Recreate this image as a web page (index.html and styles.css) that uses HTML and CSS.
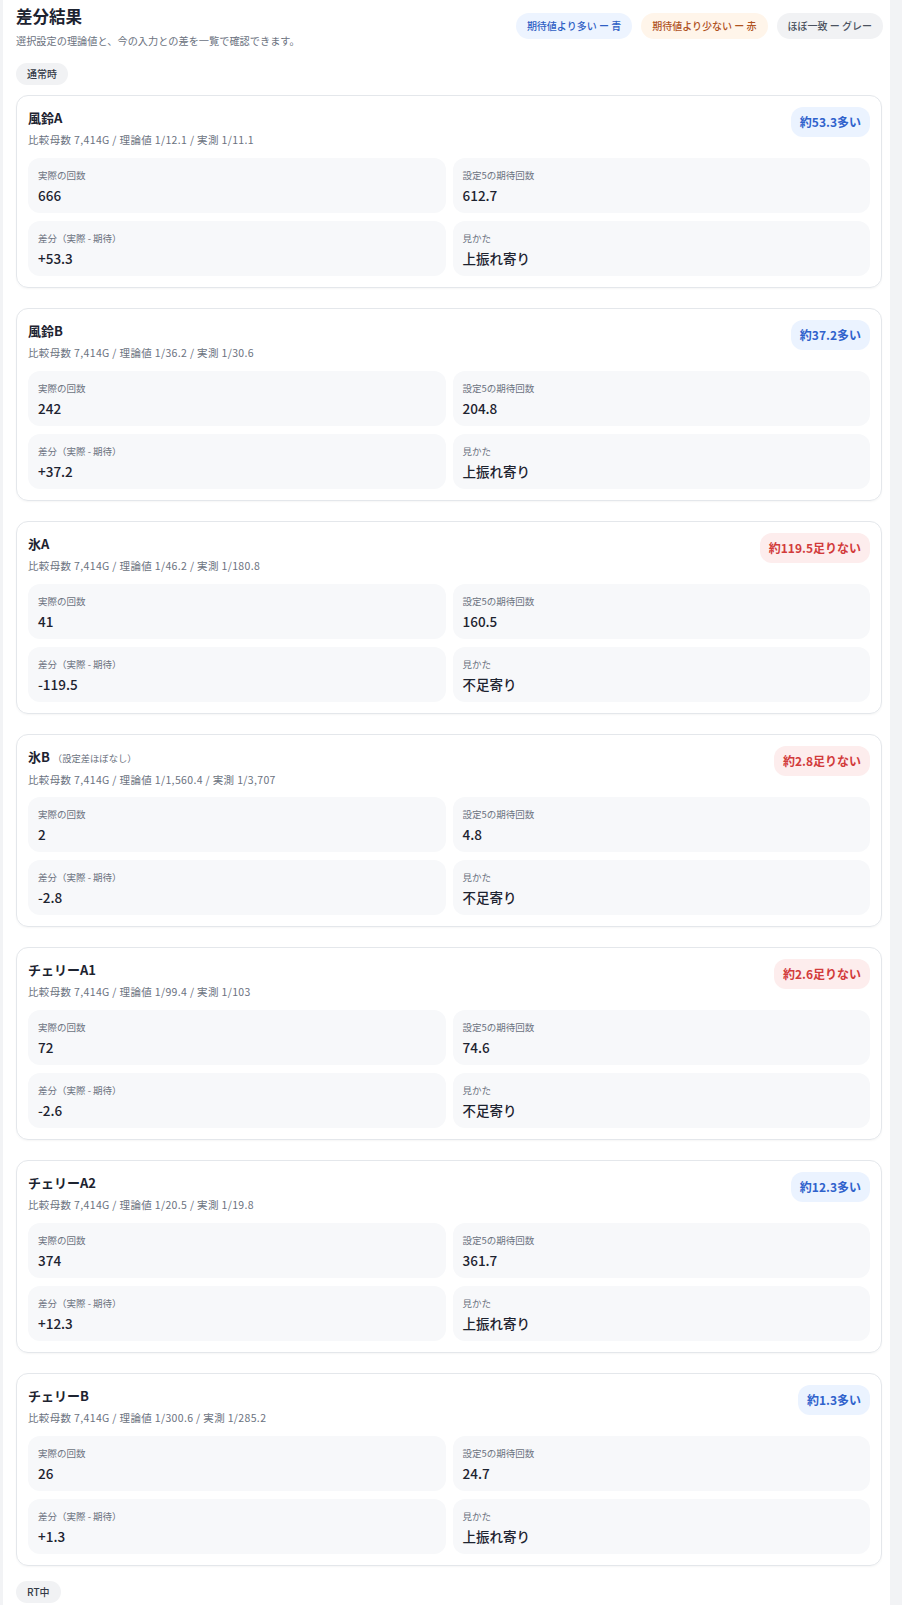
FILE: index.html
```html
<!DOCTYPE html>
<html lang="ja">
<head>
    <meta charset="UTF-8">
    <meta name="viewport" content="width=device-width, initial-scale=1.0">
    <title>差分結果</title>
    <link rel="stylesheet" href="styles.css">
</head>
<body>
    <div class="panel">
        <div class="result-head">
            <div>
                <h2 class="result-title">差分結果</h2>
                <p class="result-desc">選択設定の理論値と、今の入力との差を一覧で確認できます。</p>
            </div>
            <div class="legend">
                <span class="legend-chip up">期待値より多い ー 青</span>
                <span class="legend-chip down">期待値より少ない ー 赤</span>
                <span class="legend-chip even">ほぼ一致 ー グレー</span>
            </div>
        </div>

        <!-- 通常時 -->
        <div class="section-chip">通常時</div>
        <div class="card-list">
            <div class="card">
                <div class="card-head">
                    <div>
                        <div class="card-title">風鈴A</div>
                        <div class="card-sub">比較母数 7,414G / 理論値 1/12.1 / 実測 1/11.1</div>
                    </div>
                    <span class="badge up">約53.3多い</span>
                </div>
                <div class="stats">
                    <div class="stat"><div class="stat-label">実際の回数</div><div class="stat-value">666</div></div>
                    <div class="stat"><div class="stat-label">設定5の期待回数</div><div class="stat-value">612.7</div></div>
                    <div class="stat"><div class="stat-label">差分（実際 - 期待）</div><div class="stat-value">+53.3</div></div>
                    <div class="stat"><div class="stat-label">見かた</div><div class="stat-value">上振れ寄り</div></div>
                </div>
            </div>

            <div class="card">
                <div class="card-head">
                    <div>
                        <div class="card-title">風鈴B</div>
                        <div class="card-sub">比較母数 7,414G / 理論値 1/36.2 / 実測 1/30.6</div>
                    </div>
                    <span class="badge up">約37.2多い</span>
                </div>
                <div class="stats">
                    <div class="stat"><div class="stat-label">実際の回数</div><div class="stat-value">242</div></div>
                    <div class="stat"><div class="stat-label">設定5の期待回数</div><div class="stat-value">204.8</div></div>
                    <div class="stat"><div class="stat-label">差分（実際 - 期待）</div><div class="stat-value">+37.2</div></div>
                    <div class="stat"><div class="stat-label">見かた</div><div class="stat-value">上振れ寄り</div></div>
                </div>
            </div>

            <div class="card">
                <div class="card-head">
                    <div>
                        <div class="card-title">氷A</div>
                        <div class="card-sub">比較母数 7,414G / 理論値 1/46.2 / 実測 1/180.8</div>
                    </div>
                    <span class="badge down">約119.5足りない</span>
                </div>
                <div class="stats">
                    <div class="stat"><div class="stat-label">実際の回数</div><div class="stat-value">41</div></div>
                    <div class="stat"><div class="stat-label">設定5の期待回数</div><div class="stat-value">160.5</div></div>
                    <div class="stat"><div class="stat-label">差分（実際 - 期待）</div><div class="stat-value">-119.5</div></div>
                    <div class="stat"><div class="stat-label">見かた</div><div class="stat-value">不足寄り</div></div>
                </div>
            </div>

            <div class="card">
                <div class="card-head">
                    <div>
                        <div class="card-title">氷B<span class="card-note">（設定差ほぼなし）</span></div>
                        <div class="card-sub">比較母数 7,414G / 理論値 1/1,560.4 / 実測 1/3,707</div>
                    </div>
                    <span class="badge down">約2.8足りない</span>
                </div>
                <div class="stats">
                    <div class="stat"><div class="stat-label">実際の回数</div><div class="stat-value">2</div></div>
                    <div class="stat"><div class="stat-label">設定5の期待回数</div><div class="stat-value">4.8</div></div>
                    <div class="stat"><div class="stat-label">差分（実際 - 期待）</div><div class="stat-value">-2.8</div></div>
                    <div class="stat"><div class="stat-label">見かた</div><div class="stat-value">不足寄り</div></div>
                </div>
            </div>

            <div class="card">
                <div class="card-head">
                    <div>
                        <div class="card-title">チェリーA1</div>
                        <div class="card-sub">比較母数 7,414G / 理論値 1/99.4 / 実測 1/103</div>
                    </div>
                    <span class="badge down">約2.6足りない</span>
                </div>
                <div class="stats">
                    <div class="stat"><div class="stat-label">実際の回数</div><div class="stat-value">72</div></div>
                    <div class="stat"><div class="stat-label">設定5の期待回数</div><div class="stat-value">74.6</div></div>
                    <div class="stat"><div class="stat-label">差分（実際 - 期待）</div><div class="stat-value">-2.6</div></div>
                    <div class="stat"><div class="stat-label">見かた</div><div class="stat-value">不足寄り</div></div>
                </div>
            </div>

            <div class="card">
                <div class="card-head">
                    <div>
                        <div class="card-title">チェリーA2</div>
                        <div class="card-sub">比較母数 7,414G / 理論値 1/20.5 / 実測 1/19.8</div>
                    </div>
                    <span class="badge up">約12.3多い</span>
                </div>
                <div class="stats">
                    <div class="stat"><div class="stat-label">実際の回数</div><div class="stat-value">374</div></div>
                    <div class="stat"><div class="stat-label">設定5の期待回数</div><div class="stat-value">361.7</div></div>
                    <div class="stat"><div class="stat-label">差分（実際 - 期待）</div><div class="stat-value">+12.3</div></div>
                    <div class="stat"><div class="stat-label">見かた</div><div class="stat-value">上振れ寄り</div></div>
                </div>
            </div>

            <div class="card">
                <div class="card-head">
                    <div>
                        <div class="card-title">チェリーB</div>
                        <div class="card-sub">比較母数 7,414G / 理論値 1/300.6 / 実測 1/285.2</div>
                    </div>
                    <span class="badge up">約1.3多い</span>
                </div>
                <div class="stats">
                    <div class="stat"><div class="stat-label">実際の回数</div><div class="stat-value">26</div></div>
                    <div class="stat"><div class="stat-label">設定5の期待回数</div><div class="stat-value">24.7</div></div>
                    <div class="stat"><div class="stat-label">差分（実際 - 期待）</div><div class="stat-value">+1.3</div></div>
                    <div class="stat"><div class="stat-label">見かた</div><div class="stat-value">上振れ寄り</div></div>
                </div>
            </div>
        </div>

        <!-- RT中 -->
        <div class="section-chip next">RT中</div>
    </div>
</body>
</html>
```

FILE: styles.css
```css
body {
    margin: 0;
    padding: 0;
    background-color: #f2f3f5;
    font-family: "Noto Sans CJK JP", "Noto Sans", sans-serif;
    color: #1f2329;
}
.panel {
    margin-left: 3px;
    width: 887px;
    min-height: 1605px;
    box-sizing: border-box;
    background-color: #fff;
    padding: 5px 8px 0 13px;
}
.result-head {
    display: flex;
    justify-content: space-between;
    align-items: flex-start;
}
.result-title {
    margin: 0;
    font-size: 16.5px;
    line-height: 22px;
    font-weight: 700;
    color: #1d2330;
}
.result-desc {
    margin: 6px 0 0;
    font-size: 10.2px;
    line-height: 16px;
    color: #6b7280;
}
.legend {
    display: flex;
    gap: 9px;
    margin-top: 8px;
    margin-right: -1px;
}
.legend-chip {
    height: 26px;
    line-height: 26px;
    padding: 0 11px;
    border-radius: 13px;
    font-size: 10px;
    font-weight: 500;
}
.legend-chip.up {
    background-color: #edf4ff;
    color: #2f5fc4;
}
.legend-chip.down {
    background-color: #fff5ea;
    color: #b0531f;
}
.legend-chip.even {
    background-color: #f1f2f4;
    color: #4b5260;
}
.section-chip {
    display: inline-block;
    margin-top: 14px;
    height: 22px;
    line-height: 22px;
    padding: 0 11px;
    border-radius: 11px;
    background-color: #f1f2f4;
    color: #343a46;
    font-size: 10px;
    font-weight: 500;
}
.section-chip.next {
    margin-top: 15px;
}
.card-list {
    display: flex;
    flex-direction: column;
    gap: 20px;
    margin-top: 10px;
}
.card {
    border: 1px solid #e4e7eb;
    border-radius: 12px;
    padding: 11px;
    box-shadow: 0 1px 2px rgba(0, 0, 0, 0.04);
}
.card-head {
    display: flex;
    justify-content: space-between;
    align-items: flex-start;
    height: 40px;
}
.card-title {
    margin-top: 2px;
    font-size: 13px;
    line-height: 18px;
    font-weight: 700;
    color: #1d2330;
}
.card-note {
    margin-left: 3px;
    font-size: 9.3px;
    font-weight: 400;
    color: #6b7280;
}
.card-sub {
    margin-top: 5px;
    font-size: 10.5px;
    line-height: 15px;
    letter-spacing: 0.35px;
    color: #6b7280;
}
.badge {
    height: 30px;
    line-height: 30px;
    padding: 0 9px;
    border-radius: 12px;
    font-size: 12px;
    font-weight: 600;
}
.badge.up {
    background-color: #ebf3ff;
    color: #2f62cc;
}
.badge.down {
    background-color: #fdeded;
    color: #d23b3b;
}
.stats {
    display: grid;
    grid-template-columns: 1fr 1fr;
    gap: 8px 7px;
    margin-top: 11px;
}
.stat {
    background-color: #f7f8fa;
    border-radius: 12px;
    padding: 9px 10px 8px;
}
.stat-label {
    font-size: 9.5px;
    line-height: 16px;
    color: #6b7280;
}
.stat-value {
    margin-top: 2px;
    font-size: 13.5px;
    line-height: 20px;
    font-weight: 500;
    color: #1d2330;
}
```
